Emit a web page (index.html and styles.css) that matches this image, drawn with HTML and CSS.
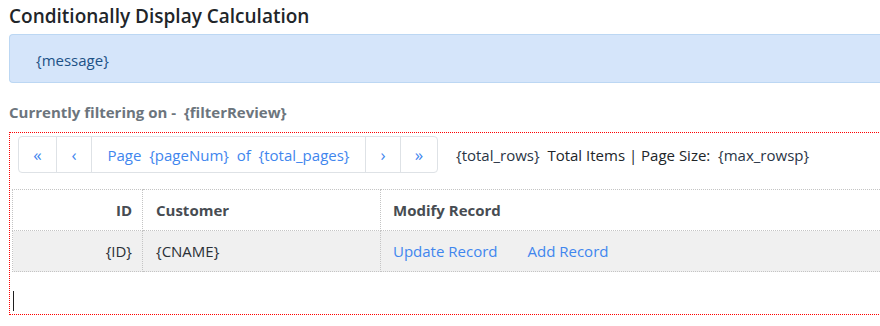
FILE: index.html
```html
<!DOCTYPE html>
<html>
<head>
<meta charset="utf-8">
<link rel="stylesheet" href="styles.css">
</head>
<body>
<div class="page">
  <h1 class="title">Conditionally Display Calculation</h1>
  <div class="alert">{message}</div>
  <div class="filter">Currently filtering on -&nbsp;&nbsp;{filterReview}</div>
  <div class="frame">
    <div class="toolbar">
      <ul class="pager">
        <li class="pg pg-icon">&laquo;</li>
        <li class="pg pg-icon">&lsaquo;</li>
        <li class="pg pg-text">Page&nbsp;&nbsp;{pageNum}&nbsp;&nbsp;of&nbsp;&nbsp;{total_pages}</li>
        <li class="pg pg-icon">&rsaquo;</li>
        <li class="pg pg-icon">&raquo;</li>
      </ul>
      <div class="summary"><span class="ph">{total_rows}</span>&nbsp;&nbsp;Total Items | Page Size:&nbsp;&nbsp;<span class="ph">{max_rowsp}</span></div>
    </div>
    <table class="grid">
      <thead>
        <tr>
          <th class="c-id">ID</th>
          <th class="c-cust">Customer</th>
          <th class="c-mod">Modify Record</th>
        </tr>
      </thead>
      <tbody>
        <tr class="row">
          <td class="c-id">{ID}</td>
          <td class="c-cust">{CNAME}</td>
          <td class="c-mod"><a class="lnk">Update Record</a><a class="lnk lnk-add">Add Record</a></td>
        </tr>
      </tbody>
    </table>
    <div class="cursor-line"><span class="cursor"></span></div>
  </div>
</div>
</body>
</html>
```
FILE: styles.css
```css
html, body {
  margin: 0;
  padding: 0;
  overflow: hidden;
  background: #fff;
}
body {
  font-family: "Open Sans", "Noto Sans", sans-serif;
  font-size: 15px;
  color: #212529;
}
.page {
  width: 900px;
  padding: 3px 0 0 9px;
}
.title {
  margin: 0;
  font-size: 19px;
  font-weight: 600;
  line-height: 26px;
  color: #212529;
}
.alert {
  margin-top: 5px;
  height: 49px;
  box-sizing: border-box;
  background: #d5e5fa;
  border: 1px solid #bcd7f3;
  border-right: none;
  border-radius: 4px 0 0 4px;
  padding: 2px 0 0 26px;
  display: flex;
  align-items: center;
  color: #1d5186;
  font-size: 15px;
}
.filter {
  margin-top: 19px;
  font-weight: 700;
  font-size: 15px;
  color: #6c757d;
  line-height: 20px;
}
.frame {
  margin-top: 10px;
  border: 1px dotted #ff0000;
  border-right: none;
  padding: 3px 0 0 2px;
  height: 183px;
  box-sizing: border-box;
}
.toolbar {
  display: flex;
  align-items: center;
  margin-left: 6px;
}
.pager {
  list-style: none;
  margin: 0;
  padding: 0;
  display: flex;
  border: 1px solid #dee2e6;
  border-radius: 4px;
  height: 37px;
  box-sizing: border-box;
}
.pg {
  display: flex;
  align-items: center;
  justify-content: center;
  color: #3f86ee;
  border-left: 1px solid #dee2e6;
  font-size: 15px;
}
.pg:first-child { border-left: none; }
.pg-icon {
  width: 34px;
  font-size: 17px;
}
.pg-icon:first-child { width: 37px; }
.pg-icon:last-child { width: 36px; }
.pg-text {
  width: 273px;
}
.summary {
  margin-left: 18px;
  color: #212529;
  font-size: 15px;
}
.ph { color: #2a3546; }
.grid {
  margin-top: 16px;
  width: 880px;
  border-collapse: collapse;
  font-size: 15px;
}
.grid th, .grid td {
  border: 1px dotted #c4c4c4;
  height: 41px;
  padding: 0 10px;
  box-sizing: border-box;
}
.grid th {
  font-weight: 700;
  color: #474c52;
  text-align: left;
}
.grid th.c-id, .grid td.c-id {
  text-align: right;
  width: 130px;
}
.grid .c-cust { width: 238px; padding-left: 13px; }
.grid .c-mod { padding-left: 12px; }
.row td { background: #f0f0f0; color: #2a2f36; }
.lnk { color: #3f86ee; }
.lnk-add { margin-left: 30px; }
.cursor-line {
  padding: 19px 0 0 1px;
  height: 20px;
}
.cursor {
  display: block;
  width: 1px;
  height: 20px;
  background: #1f1f1f;
}
```
